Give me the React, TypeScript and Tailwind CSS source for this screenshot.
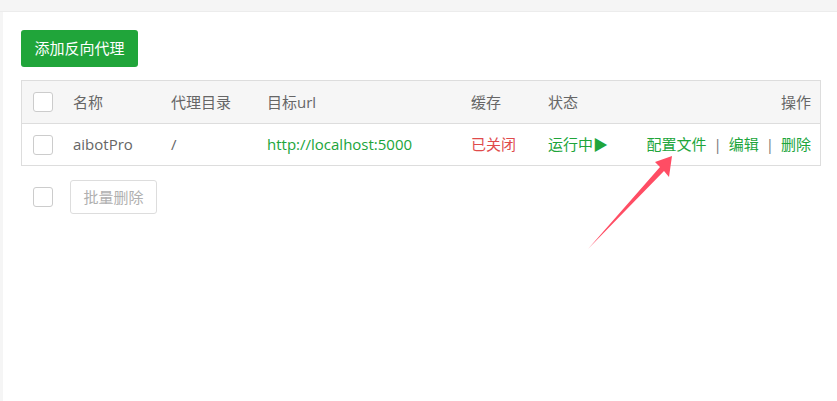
import React from 'react'

function Checkbox() {
  return <span className="block w-5 h-5 rounded-[3px] border border-[#cccccc] bg-white" />
}

export default function App() {
  const font = { fontFamily: '"Open Sans", "Noto Sans CJK SC", sans-serif' }
  const cols = 'grid grid-cols-[41px_98px_96px_204px_77px_1fr_auto] items-center'

  return (
    <div className="relative w-[837px] h-[401px] bg-[#f5f5f5] overflow-hidden text-[15px] text-[#666]" style={font}>
      {/* top bar */}
      <div className="h-[12px] border-b border-[#ececec]" />
      <div className="ml-[3px] h-[389px] bg-white pt-[18px] pl-[18px] pr-[16px]">
        <button className="w-[117px] h-[37px] rounded-[3px] bg-[#20a53a] text-white text-[15px] flex items-center justify-center">
          添加反向代理
        </button>

        {/* table */}
        <div className="mt-[13px] w-[800px] border border-[#dddddd]">
          <div className={`${cols} h-[43px] bg-[#f6f6f6] border-b border-[#dddddd]`}>
            <div className="pl-[11px]"><Checkbox /></div>
            <div className="pl-[10px]">名称</div>
            <div className="pl-[10px]">代理目录</div>
            <div className="pl-[10px]">目标url</div>
            <div className="pl-[10px]">缓存</div>
            <div className="pl-[10px]">状态</div>
            <div className="pr-[9px] text-right">操作</div>
          </div>
          <div className={`${cols} h-[41px]`}>
            <div className="pl-[11px]"><Checkbox /></div>
            <div className="pl-[10px]">aibotPro</div>
            <div className="pl-[10px]">/</div>
            <div className="pl-[10px] text-[#20a53a]">http://localhost:5000</div>
            <div className="pl-[10px] text-[#e04b4b]">已关闭</div>
            <div className="pl-[10px] text-[#20a53a]">运行中▶</div>
            <div className="pr-[9px] flex items-center text-[#20a53a]">
              <span>配置文件</span>
              <span className="mx-[7px] text-[#777]">|</span>
              <span>编辑</span>
              <span className="mx-[7px] text-[#777]">|</span>
              <span>删除</span>
            </div>
          </div>
        </div>

        {/* batch */}
        <div className="mt-[14px] flex items-center">
          <div className="pl-[12px]"><Checkbox /></div>
          <button className="ml-[17px] w-[87px] h-[34px] rounded-[3px] border border-[#dddddd] bg-white text-[#b0b0b0] text-[15px] flex items-center justify-center">
            批量删除
          </button>
        </div>
      </div>

      {/* annotation arrow */}
      <svg className="absolute left-0 top-0 pointer-events-none" width="837" height="401" viewBox="0 0 837 401">
        <polygon
          points="672,156 669,177 664,171 588,249 660,167 655,162"
          fill="#ff4d64"
        />
      </svg>
    </div>
  )
}
